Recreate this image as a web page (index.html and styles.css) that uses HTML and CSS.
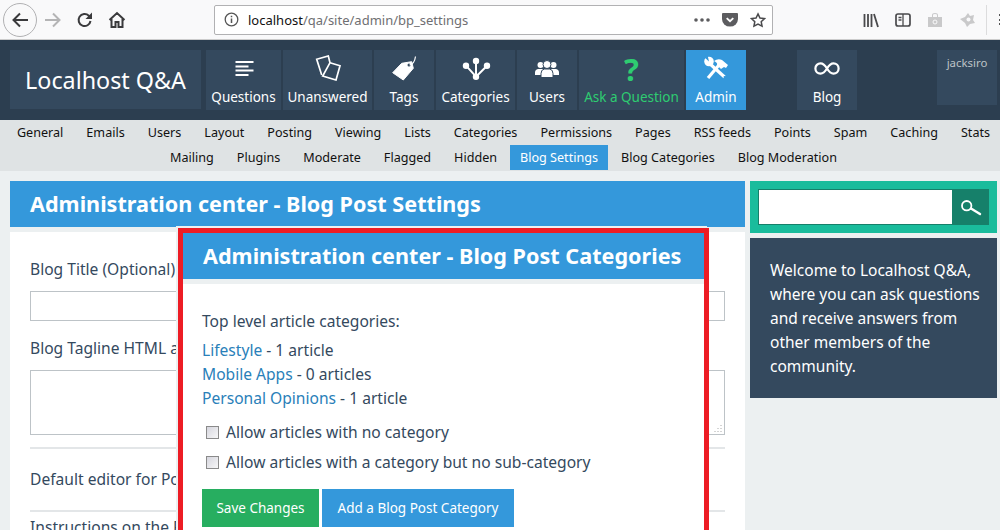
FILE: index.html
```html
<!doctype html>
<html lang="en">
<head>
<meta charset="UTF-8">
<title>Localhost Q&amp;A - Blog Post Settings</title>
<link rel="stylesheet" href="styles.css">
</head>
<body>

<!-- browser toolbar -->
<div class="toolbar">
	<div class="tb-left">
		<span class="back-btn">
			<svg width="18" height="18" viewBox="0 0 18 18"><path d="M17 9H2.500M9 2.500L2.500 9L9 15.500" fill="none" stroke="#3a3a3c" stroke-width="2"/></svg>
		</span>
		<svg class="tb-icon" width="18" height="18" viewBox="0 0 18 18"><path d="M1 9h14.500M9 2.500L15.500 9L9 15.500" fill="none" stroke="#b4b4b5" stroke-width="2"/></svg>
		<svg class="tb-icon" width="18" height="18" viewBox="0 0 18 18"><path d="M14.500 10a6 6 0 1 1-1.700-5.200L15 7" fill="none" stroke="#3a3a3c" stroke-width="2"/><path d="M16 1.500V8H9.500z" fill="#3a3a3c"/></svg>
		<svg class="tb-icon" width="18" height="18" viewBox="0 0 18 18"><path d="M1.500 9L9 2l7.500 7M3.500 8v8h4v-5h3v5h4V8" fill="none" stroke="#3a3a3c" stroke-width="2"/></svg>
	</div>
	<div class="urlbar">
		<svg width="15" height="15" viewBox="0 0 15 15"><circle cx="7.500" cy="7.500" r="6.300" fill="none" stroke="#555" stroke-width="1.300"/><path d="M7.500 6.500v4.500M7.500 3.800v1.500" stroke="#555" stroke-width="1.500"/></svg>
		<span class="url"><b>localhost</b>/qa/site/admin/bp_settings</span>
		<svg width="16" height="16" viewBox="0 0 16 16"><g fill="#5c5c5f"><circle cx="2" cy="8" r="1.800"/><circle cx="8" cy="8" r="1.800"/><circle cx="14" cy="8" r="1.800"/></g></svg>
		<svg class="url-btn" width="16" height="16" viewBox="0 0 17 16"><path d="M1 .5h15q1 0 1 1V7a8.500 8 0 0 1-17 0V1.500q0-1 1-1z" fill="#5c5c5f"/><path d="M5 6l3.500 3.300L12 6" fill="none" stroke="#fff" stroke-width="2"/></svg>
		<svg class="url-btn" width="16" height="16" viewBox="0 0 17 16"><path d="M8.500 1.500l2.100 4.400 4.800.6-3.500 3.300.9 4.800-4.300-2.300-4.300 2.300.9-4.800-3.500-3.300 4.800-.6z" fill="none" stroke="#4a4a4c" stroke-width="1.600"/></svg>
	</div>
	<div class="tb-right">
		<svg width="16" height="16" viewBox="0 0 16 16"><path d="M1.500 2v13M5 2v13M8.500 2v13M11 2l4 13" fill="none" stroke="#4a4a4c" stroke-width="1.800"/></svg>
		<svg width="16" height="16" viewBox="0 0 16 16"><rect x="1" y="2" width="14" height="12" rx="2" fill="none" stroke="#4a4a4c" stroke-width="1.700"/><path d="M8 2v12M3.500 5.500h3M3.500 8h3" stroke="#4a4a4c" stroke-width="1.300"/></svg>
		<svg width="16" height="16" viewBox="0 0 16 16"><path d="M1 5h14v10H1zM5 5V3q0-2 3-2t3 2v2h-1V3q0-1-2-1T6 3v2z" fill="#c9c9ca"/><circle cx="8" cy="10" r="2" fill="none" stroke="#f9f9fa"/></svg>
		<svg width="16" height="16" viewBox="0 0 16 16"><path d="M1 7l5-2 3-4 2 3 4-1-1 5 2 3-5 1-3 3-2-4z" fill="#c9c9ca"/><circle cx="9.500" cy="7.500" r="2" fill="#f9f9fa"/></svg>
		<span class="tb-sep"></span>
		<span class="tb-more"></span>
	</div>
</div>

<!-- site header -->
<header class="site-head">
	<a class="logo">Localhost Q&amp;A</a>
	<nav class="main-nav">
		<a class="nav-item w-questions">
			<svg width="22" height="26" viewBox="0 0 22 26"><path d="M2.500 7h18M2.500 11.500h13M2.500 15.500h18M2.500 20h13" stroke="#fff" stroke-width="1.800"/></svg>
			Questions
		</a>
		<a class="nav-item w-unanswered">
			<svg width="27" height="26" viewBox="0 0 27 26"><path d="M15.500 7.700L13.800 1 2.200 4.300 7.200 20" fill="none" stroke="#fff" stroke-width="1.700"/><path d="M15.500 7.700l10 3-4 14.300-13.300-4z" fill="none" stroke="#fff" stroke-width="1.700"/></svg>
			Unanswered
		</a>
		<a class="nav-item w-tags">
			<svg width="26" height="26" viewBox="0 0 26 26"><path d="M1.700 17.700L12.300 25l10-11.700-1.600-6.600-10 1.600z" fill="#fff" stroke="#fff" stroke-linejoin="round"/><circle cx="18" cy="10" r="1.500" fill="#34495e"/><path d="M18.500 10q5-1 6-8.500" fill="none" stroke="#fff" stroke-width="1.200"/></svg>
			Tags
		</a>
		<a class="nav-item w-categories">
			<svg width="30" height="26" viewBox="0 0 30 26"><g fill="#fff"><circle cx="15" cy="6" r="3.200"/><circle cx="5" cy="10.700" r="3.200"/><circle cx="26" cy="10.700" r="3.200"/><circle cx="15" cy="21.700" r="3.200"/></g><path d="M15 6v15.700M5 10.700l10 11M26 10.700L15 21.700" stroke="#fff" stroke-width="2" fill="none"/></svg>
			Categories
		</a>
		<a class="nav-item w-users">
			<svg width="26" height="24" viewBox="0 0 26 24"><g fill="#fff"><circle cx="6.500" cy="10" r="3"/><circle cx="19.500" cy="10" r="3"/><path d="M1 20v-2.500q0-3 3-3.500h5q3 .5 3 3.500V20zM14 20v-2.500q0-3 3-3.500h5q3 .5 3 3.500V20z"/></g><circle cx="13" cy="9.500" r="4" fill="#fff" stroke="#34495e"/><path d="M7 22.500v-4q0-4 3.500-4.500h5q3.500 .5 3.500 4.500v4z" fill="#fff" stroke="#34495e"/></svg>
			Users
		</a>
		<a class="nav-item ask w-ask">
			<span class="ask-mark">?</span>
			Ask a Question
		</a>
		<a class="nav-item active w-admin">
			<svg width="26" height="26" viewBox="0 0 26 26"><path d="M5 23L16 10" stroke="#fff" stroke-width="3.200"/><path d="M11 6q4-3 8-1l6 5-2 3-2-1-3 2-4-4q1-2-3-4z" fill="#fff"/><path d="M6 8l15.500 14" stroke="#fff" stroke-width="3.200"/><circle cx="6" cy="6.500" r="4.800" fill="#fff"/><path d="M6 6.500L1 2l3.500-2z" fill="#3498db"/><circle cx="21.500" cy="22" r="1" fill="#3498db"/></svg>
			Admin
		</a>
		<a class="nav-item blog w-blog">
			<svg width="26" height="13" viewBox="0 0 26 14"><path d="M13 7C10 2 8 1.500 6 1.500a5.500 5.500 0 0 0 0 11C8 12.500 10 12 13 7s5-5.500 7-5.500a5.500 5.500 0 0 1 0 11C18 12.500 16 12 13 7z" fill="none" stroke="#fff" stroke-width="2.400"/></svg>
			Blog
		</a>
	</nav>
	<div class="user-box">jacksiro</div>
</header>

<!-- admin sub navigation -->
<nav class="sub-nav">
	<div class="sub-row">
		<a>General</a><a>Emails</a><a>Users</a><a>Layout</a><a>Posting</a><a>Viewing</a><a>Lists</a><a>Categories</a><a>Permissions</a><a>Pages</a><a>RSS feeds</a><a>Points</a><a>Spam</a><a>Caching</a><a>Stats</a>
	</div>
	<div class="sub-row">
		<a>Mailing</a><a>Plugins</a><a>Moderate</a><a>Flagged</a><a>Hidden</a><a class="current">Blog Settings</a><a>Blog Categories</a><a>Blog Moderation</a>
	</div>
</nav>

<div class="page">
	<main class="main">
		<h1 class="title-bar">Administration center - Blog Post Settings</h1>
		<div class="form-box">
			<div class="field">
				<label>Blog Title (Optional)</label>
				<div class="fake-input"></div>
			</div>
			<div class="field">
				<label>Blog Tagline HTML at the top</label>
				<div class="fake-area">
					<svg class="grip" width="9" height="9" viewBox="0 0 9 9"><path d="M8 0v1M8 3v1M5 3v1M8 6v1M5 6v1M2 6v1" stroke="#aaa" transform="translate(0 1)"/></svg>
				</div>
			</div>
			<div class="field">
				<label>Default editor for Posts</label>
			</div>
			<div class="field last">
				<label>Instructions on the Post page</label>
			</div>
		</div>
	</main>

	<aside class="side">
		<div class="search">
			<div class="search-input"></div>
			<span class="search-btn">
				<svg width="22" height="20" viewBox="0 0 22 20"><circle cx="6.700" cy="8.700" r="4.700" fill="none" stroke="#fff" stroke-width="1.800"/><path d="M11 11.500l9 5.500" stroke="#fff" stroke-width="2.400" stroke-linecap="round"/></svg>
			</span>
		</div>
		<div class="welcome">Welcome to Localhost Q&amp;A, where you can ask questions and receive answers from other members of the community.</div>
	</aside>
</div>

<!-- red highlighted box laid over the page -->
<section class="overlay">
	<h2 class="title-bar">Administration center - Blog Post Categories</h2>
	<div class="overlay-body">
		<p class="top-label">Top level article categories:</p>
		<ul class="cat-list">
			<li><a>Lifestyle</a> - 1 article</li>
			<li><a>Mobile Apps</a> - 0 articles</li>
			<li><a>Personal Opinions</a> - 1 article</li>
		</ul>
		<label class="check"><input type="checkbox"> Allow articles with no category</label>
		<label class="check"><input type="checkbox"> Allow articles with a category but no sub-category</label>
		<div class="buttons">
			<span class="btn green">Save Changes</span>
			<span class="btn blue">Add a Blog Post Category</span>
		</div>
	</div>
</section>

</body>
</html>
```

FILE: styles.css
```css
*{
	box-sizing: border-box;
}
html, body{
	height: 530px;
	overflow: hidden;
}
body{
	margin: 0;
	background-color: #ecf0f1;
	font-family: "Noto Sans", "Open Sans", sans-serif;
	font-size: 15.6px;
	color: #34495e;
	position: relative;
}
a{
	text-decoration: none;
}

/* browser toolbar */
.toolbar{
	height: 40px;
	background-color: #f9f9fa;
	border-bottom: 1px solid #ccc;
	display: flex;
	align-items: center;
}
.tb-left{
	width: 214px;
	flex-shrink: 0;
	padding-left: 3px;
	display: flex;
	align-items: center;
}
.back-btn{
	width: 34px;
	height: 34px;
	border: 1px solid #b1b1b3;
	border-radius: 50%;
	display: flex;
	align-items: center;
	justify-content: center;
	margin-right: 7px;
}
.tb-icon{
	margin-right: 14px;
}
.urlbar{
	width: 559px;
	flex-shrink: 0;
	height: 30px;
	background-color: #fff;
	border: 1px solid #b1b1b3;
	border-radius: 2px;
	display: flex;
	align-items: center;
	padding: 0 6px 0 9px;
	gap: 9px;
}
.url{
	flex: 1;
	font-size: 13px;
	color: #6f6f72;
}
.url b{
	font-weight: normal;
	color: #111;
}
.url-btn{
	margin-left: 3px;
}
.tb-right{
	flex: 1;
	display: flex;
	align-items: center;
	gap: 16px;
	padding-left: 90px;
}
.tb-sep{
	width: 1px;
	height: 30px;
	background-color: #dcdcdd;
	margin-left: -5px;
}
.tb-more{
	width: 2px;
	height: 11px;
	margin-left: -4px;
	border-left: 2px dotted #555;
}

/* site header */
.site-head{
	height: 80px;
	background-color: #2c3e50;
	padding: 10px 3px 0 10px;
	display: flex;
	align-items: flex-start;
}
.logo{
	width: 191px;
	height: 59px;
	background-color: #34495e;
	color: #fff;
	font-size: 23.3px;
	line-height: 61px;
	text-align: center;
}
.main-nav{
	display: flex;
	gap: 2px;
	margin-left: 5px;
	width: 731px;
}
.nav-item{
	height: 60px;
	background-color: #34495e;
	color: #fff;
	font-size: 13.5px;
	display: flex;
	flex-direction: column;
	align-items: center;
	justify-content: flex-end;
	padding-bottom: 3px;
	line-height: 20px;
	white-space: nowrap;
	position: relative;
}
.nav-item svg, .ask-mark{
	position: absolute;
	top: 5px;
	left: 50%;
	transform: translateX(-50%);
}
.w-questions{ width: 75px; }
.w-unanswered{ width: 89px; }
.w-tags{ width: 60px; }
.w-categories{ width: 79px; }
.w-users{ width: 60px; }
.w-ask{ width: 105px; }
.w-admin{ width: 60px; }
.w-blog{ width: 60px; margin-left: 49px; }
.nav-item.blog svg{
	top: 12px;
}
.ask{
	color: #2ecc71;
}
.ask-mark{
	top: 1px;
	font-size: 31px;
	font-weight: bold;
	line-height: 36px;
}
.active{
	background-color: #3498db;
}
.user-box{
	width: 60px;
	height: 55px;
	background-color: #34495e;
	color: #bdc3c7;
	font-size: 11.4px;
	text-align: center;
	padding-top: 5px;
}

/* admin sub navigation */
.sub-nav{
	height: 51px;
	background-color: #dfe3e4;
	padding-left: 7px;
}
.sub-row{
	display: flex;
	justify-content: center;
	gap: 3px;
}
.sub-row a{
	height: 25px;
	line-height: 25px;
	padding: 0 10px;
	font-size: 12.6px;
	color: #111;
	white-space: nowrap;
}
.sub-row a.current{
	background-color: #3498db;
	color: #fff;
}

/* page columns */
.page{
	display: flex;
	gap: 5px;
	padding: 10px 3px 0 10px;
}
.main{
	width: 735px;
}
.side{
	width: 247px;
}
.title-bar{
	margin: 0;
	height: 46px;
	background-color: #3498db;
	color: #fff;
	font-size: 21.6px;
	line-height: 45px;
	padding-left: 20px;
	font-weight: bold;
	white-space: nowrap;
}
.form-box{
	margin-top: 5px;
	height: 300px;
	background-color: #fff;
	padding: 0 20px;
}
.field{
	border-bottom: 2px solid #e3e6e8;
}
.field label{
	display: block;
	line-height: 22px;
	white-space: nowrap;
}
.field:nth-child(1){
	height: 98px;
	padding-top: 26px;
	border-bottom: 0;
}
.field:nth-child(2){
	height: 119px;
	padding-top: 7px;
}
.field:nth-child(3){
	height: 63px;
	padding-top: 19px;
}
.field.last{
	border-bottom: 0;
	padding-top: 4px;
}
.fake-input{
	height: 30px;
	margin-top: 11px;
	border: 1px solid #bdc3c7;
}
.fake-area{
	height: 65px;
	margin-top: 11px;
	border: 1px solid #bdc3c7;
	background-color: #fff;
	position: relative;
}
.grip{
	position: absolute;
	right: 2px;
	bottom: 1px;
}

/* sidebar */
.search{
	height: 52px;
	background-color: #1abc9c;
	padding: 8px;
	display: flex;
}
.search-input{
	flex: 1;
	background-color: #fff;
	border: 1px solid #16806a;
}
.search-btn{
	width: 36px;
	background-color: #16806a;
	display: flex;
	align-items: center;
	justify-content: center;
}
.welcome{
	margin-top: 5px;
	height: 160px;
	background-color: #34495e;
	color: #fff;
	padding: 20px 14px 0 20px;
	font-size: 15.5px;
	line-height: 24px;
}

/* red highlighted box */
.overlay{
	position: absolute;
	left: 178px;
	top: 228px;
	width: 531px;
	height: 320px;
	border: 5px solid #ed1c24;
	box-shadow: -2px -2px 0 #ecf0f1;
	background-color: #ecf0f1;
}
.overlay-body{
	margin-top: 5px;
	height: 260px;
	background-color: #fff;
	padding: 25px 19px 0;
}
.top-label{
	margin: 0;
	line-height: 24px;
}
.cat-list{
	list-style: none;
	margin: 5px 0 0;
	padding: 0;
}
.cat-list li{
	line-height: 24px;
}
.cat-list a{
	color: #2980b9;
}
.check{
	display: flex;
	align-items: center;
	height: 30px;
	padding-left: 4px;
	gap: 7px;
}
.cat-list + .check{
	margin-top: 7px;
}
.check input{
	appearance: none;
	margin: 0;
	width: 13px;
	height: 13px;
	border: 1px solid #8a8a8a;
	background: linear-gradient(135deg, #d6d6de, #f7f7f7);
}
.buttons{
	display: flex;
	gap: 3px;
	margin-top: 12px;
}
.btn{
	height: 38px;
	line-height: 39px;
	color: #fff;
	font-size: 13.5px;
	text-align: center;
}
.green{
	width: 117px;
	background-color: #27ae60;
}
.blue{
	width: 192px;
	background-color: #3498db;
}
```
